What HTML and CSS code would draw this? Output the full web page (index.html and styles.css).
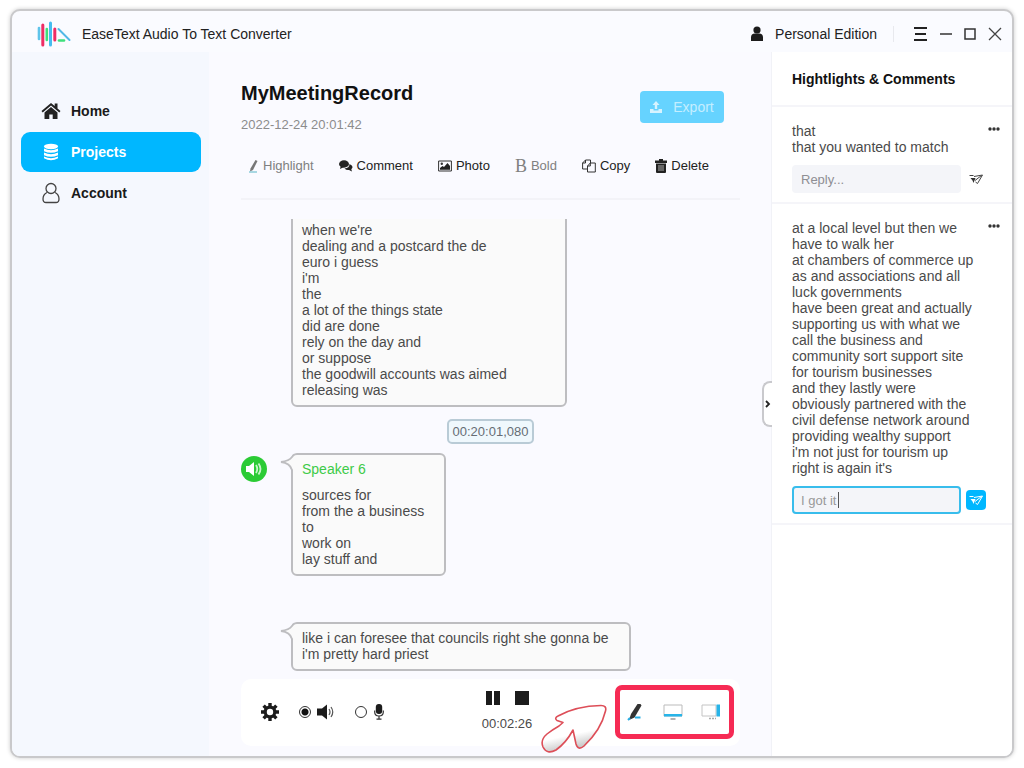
FILE: index.html
```html
<!DOCTYPE html>
<html lang="en">
<head>
    <meta charset="UTF-8">
    <meta name="viewport" content="width=device-width, initial-scale=1.0">
    <title>EaseText Audio To Text Converter</title>
    <link rel="stylesheet" href="styles.css">
</head>
<body>
    <div class="window">
        <!-- Title bar -->
        <header class="titlebar">
            <svg class="logo" width="34" height="26" viewBox="0 0 34 26" fill="none" stroke-width="2.6" stroke-linecap="round">
                <path d="M2 7v11" stroke="#5fc4ea"/>
                <path d="M5.800 4v20" stroke="#ee2d64" stroke-width="3"/>
                <path d="M9.800 8v11" stroke="#3fe07c"/>
                <path d="M13.500 2v22" stroke="#45bdf0" stroke-width="3"/>
                <path d="M17.800 8v11" stroke="#ee2d64" stroke-width="3"/>
                <path d="M21.500 8l11 11" stroke="#52b8e6" stroke-width="2"/>
                <path d="M22 19.500h5" stroke="#3fe07c"/>
            </svg>
            <span class="app-name">EaseText Audio To Text Converter</span>
            <span class="edition">
                <svg width="14" height="16" viewBox="0 0 14 16" fill="#1c1c1c"><circle cx="7" cy="4" r="3.600"/><path d="M1 15V11.500Q1 7.500 5 7.500h4q4 0 4 4V15z"/></svg>
                Personal Edition
            </span>
            <div class="window-buttons">
                <button aria-label="Menu"><svg width="14" height="16" viewBox="0 0 14 16" stroke="#222" stroke-width="2"><path d="M0 2h13M1 8h11M0 14h13"/></svg></button>
                <button aria-label="Minimize"><svg width="12" height="16" viewBox="0 0 12 16" stroke="#333" stroke-width="1.500"><path d="M0 8h12"/></svg></button>
                <button aria-label="Maximize"><svg width="12" height="12" viewBox="0 0 12 12" fill="none" stroke="#333" stroke-width="1.500"><path d="M1 1h10v10H1z"/></svg></button>
                <button aria-label="Close"><svg width="14" height="14" viewBox="0 0 14 14" stroke="#444" stroke-width="1.300"><path d="M1 1l12 12M13 1L1 13"/></svg></button>
            </div>
        </header>

        <div class="content">
            <!-- Sidebar -->
            <nav class="sidebar">
                <a href="#">
                    <svg width="20" height="18" viewBox="0 0 20 18" fill="#222"><path d="M10 1L0.500 9l1.200 1.400L10 3.500l8.300 6.900L19.500 9 16.500 6.400V1.500h-2.800v2.600z"/><path d="M10 5l-6.500 5.500V17h4.800v-4.500h3.400V17h4.800v-6.500z"/></svg>
                    Home
                </a>
                <a href="#" class="active">
                    <svg width="20" height="18" viewBox="0 0 20 18" fill="#fff"><ellipse cx="10" cy="3.500" rx="7" ry="2.700"/><path d="M3 5.600q7 3.300 14 0v2.600q-7 3.300-14 0zM3 9.600q7 3.300 14 0v2.600q-7 3.300-14 0zM3 13.500q7 3.300 14 0v1.800q-7 4-14 0z"/></svg>
                    Projects
                </a>
                <a href="#">
                    <svg width="20" height="22" viewBox="0 0 20 22" fill="none" stroke="#444" stroke-width="1.300"><circle cx="10" cy="6.500" r="5"/><path d="M6 10.500Q2 12.500 2 17q0 3.500 3 3.500h10q3 0 3-3.500 0-4.500-4-6.500"/></svg>
                    Account
                </a>
            </nav>

            <!-- Transcript -->
            <main class="main">
                <div class="record-head">
                    <div>
                        <h1>MyMeetingRecord</h1>
                        <p class="date">2022-12-24 20:01:42</p>
                    </div>
                    <button class="export">
                        <svg width="12" height="12" viewBox="0 0 12 12" fill="#d6f3ff"><path d="M6 0l3.500 4H7.200v4H4.800V4H2.500zM0 8h3.500v1.500h5V8H12v4H0z"/></svg>
                        Export
                    </button>
                </div>

                <div class="toolbar">
                    <button class="muted"><svg width="11" height="14" viewBox="0 0 11 14"><path d="M7.500 1l2 1-4.500 9-3 1.500.5-3z" fill="#777"/><path d="M1 13h8" stroke="#8ccbd8" stroke-width="1.500"/></svg>Highlight</button>
                    <button><svg width="14" height="12" viewBox="0 0 14 12" fill="#222"><ellipse cx="5" cy="4" rx="5" ry="3.700"/><path d="M1 9l1-4 3 2zM10.500 4q0 4-5 4.500Q7.500 10.500 10 10l3 1.500-.7-2.300Q15.500 6.500 10.500 4z"/></svg>Comment</button>
                    <button><svg width="14" height="12" viewBox="0 0 14 12"><path d="M.6 1h12.800v10H.6z" fill="none" stroke="#333"/><circle cx="3.800" cy="3.800" r="1.200" fill="#333"/><path d="M2 9.800V8l2.500-2L6 7l3.500-4L12 6v3.800z" fill="#222"/></svg>Photo</button>
                    <button class="muted"><span class="letter-icon">B</span>Bold</button>
                    <button><svg width="14" height="14" viewBox="0 0 14 14" fill="#fafaff" stroke="#333"><path d="M3.500 1H8.500v9H.6V4zM3.500 1v3H.6"/><path d="M8.300 4h5v9H5.500V7zM8.300 4v3H5.500"/></svg>Copy</button>
                    <button><svg width="12" height="14" viewBox="0 0 12 14" fill="#222"><path d="M4 0h4v1.500h4V4H0V1.500h4z"/><path d="M1 4.500h10V13q0 1-1 1H2q-1 0-1-1z"/><path d="M4 6v6M6 6v6M8 6v6" stroke="#aaa"/></svg>Delete</button>
                </div>

                <div class="transcript">
                    <div class="row">
                        <div class="bubble wide">
                            when we're<br>
                            dealing and a postcard the de<br>
                            euro i guess<br>
                            i'm<br>
                            the<br>
                            a lot of the things state<br>
                            did are done<br>
                            rely on the day and<br>
                            or suppose<br>
                            the goodwill accounts was aimed<br>
                            releasing was
                        </div>
                    </div>
                    <time class="stamp">00:20:01,080</time>
                    <div class="row">
                        <svg class="speaker-icon" width="26" height="26" viewBox="0 0 26 26"><circle cx="13" cy="13" r="13" fill="#2bcb35"/><path d="M5 10h3l5-4v14l-5-4H5z" fill="#fff"/><path d="M15 9q2.500 4 0 8M17.500 7.500q4 5.500 0 11" fill="none" stroke="#c8f5ca" stroke-width="1.800"/></svg>
                        <div class="bubble">
                            <svg class="tail" width="14" height="24" viewBox="0 0 14 24"><path d="M14 1Q12 6 1 9q9 1 11 7l2 2z" fill="#fafafa"/><path d="M16 1Q14 1 12 4 9 8 1 9q9 1 11 8" fill="none" stroke="#bdbdc0" stroke-width="1.800"/></svg>
                            <div class="speaker">Speaker 6</div>
                            sources for<br>
                            from the a business<br>
                            to<br>
                            work on<br>
                            lay stuff and
                        </div>
                    </div>
                    <div class="row later">
                        <div class="bubble">
                            <svg class="tail" width="14" height="24" viewBox="0 0 14 24"><path d="M14 1Q12 6 1 9q9 1 11 7l2 2z" fill="#fafafa"/><path d="M16 1Q14 1 12 4 9 8 1 9q9 1 11 8" fill="none" stroke="#bdbdc0" stroke-width="1.800"/></svg>
                            like i can foresee that councils right she gonna be<br>
                            i'm pretty hard priest
                        </div>
                    </div>
                </div>

                <!-- Player -->
                <div class="player">
                    <div class="sources">
                        <button aria-label="Settings"><svg width="18" height="18" viewBox="0 0 18 18" fill="none" stroke="#1c1c1c"><circle cx="9" cy="9" r="4.800" stroke-width="3.200"/><path d="M9 0v4M9 14v4M0 9h4M14 9h4M2.600 2.600l2.600 2.600M12.800 12.800l2.600 2.600M15.400 2.600l-2.600 2.600M5.200 12.800l-2.600 2.600" stroke-width="3.400"/></svg></button>
                        <label><input type="radio" name="source" aria-label="System sound" checked><svg width="18" height="16" viewBox="0 0 18 16"><path d="M0 4.500h2v7H0zM2 4.500h3L10 .5v15l-5-4H2z" fill="#1c1c1c"/><path d="M12 5q2 3 0 6M14 3q3.500 5 0 10" fill="none" stroke="#555" stroke-width="1.200"/></svg></label>
                        <label><input type="radio" name="source" aria-label="Microphone"><svg width="12" height="16" viewBox="0 0 10 16"><rect x="1.800" y="0" width="6.400" height="10" rx="3" fill="#1c1c1c"/><path d="M.7 6.500V8q0 4 4.300 4t4.300-4V6.500M5 12v3M2.500 15.200h5" fill="none" stroke="#333" stroke-width="1.200"/></svg></label>
                    </div>
                    <div class="transport">
                        <div class="transport-buttons">
                            <button aria-label="Pause"><svg width="14" height="14" viewBox="0 0 14 14" fill="#1c1c1c"><path d="M0 0h6v14H0zM8 0h6v14H8z"/></svg></button>
                            <button aria-label="Stop"><svg width="14" height="14" viewBox="0 0 14 14" fill="#1c1c1c"><path d="M0 0h14v14H0z"/></svg></button>
                        </div>
                        <span class="elapsed">00:02:26</span>
                    </div>
                    <div class="views">
                        <button aria-label="Mark"><svg width="18" height="18" viewBox="0 0 18 18"><path d="M11.500 1h3l1 1.500-7 12L3 17l2-6z" fill="#333"/><path d="M2 17l2-2M9 14.500h5.500" stroke="#28aee4" stroke-width="2"/></svg></button>
                        <button aria-label="Subtitle bar"><svg width="20" height="18" viewBox="0 0 20 18"><path d="M1 2h18v11H1z" fill="#fff" stroke="#bbb"/><path d="M1 11h18v2.500H1z" fill="#28b4e8"/><path d="M7.500 16h5" stroke="#999" stroke-width="1.500"/></svg></button>
                        <button aria-label="Side panel"><svg width="20" height="18" viewBox="0 0 20 18"><path d="M1 2h14v11H1z" fill="#fff" stroke="#c4c4c4"/><path d="M15.500 1.500h3.500v12h-3.500z" fill="#28b4e8"/><path d="M8 15.500h7" stroke="#aaa" stroke-width="1.500" stroke-dasharray="2 1"/></svg></button>
                    </div>
                    <svg class="pointer" width="68" height="52" viewBox="0 0 68 52">
                        <defs><linearGradient id="arrow" x1="0" y1="0" x2=".3" y2="1"><stop offset=".7" stop-color="#fff"/><stop offset="1" stop-color="#c4c4c4"/></linearGradient></defs>
                        <path d="M18 13Q36 3 61 2.500Q67 2.500 65.500 8Q61 27 44 43Q38 48 36 41L33 27Q26 40 16 47Q7 52 3 44Q0 37 7 31Q12 27 19 23L23 19.500L17 17.500Q14 15 18 13Z" fill="url(#arrow)" stroke="#dd4e58" stroke-width="1.600" stroke-linejoin="round"/>
                    </svg>
                </div>
            </main>

            <!-- Comments -->
            <aside class="comments">
                <button class="collapse" aria-label="Collapse"><svg width="6" height="8" viewBox="0 0 6 8" fill="none" stroke="#222" stroke-width="1.800"><path d="M1 1l3 3-3 3"/></svg></button>
                <h2>Hightlights &amp; Comments</h2>
                <section class="comment">
                    <button class="more" aria-label="More"><svg width="12" height="4" viewBox="0 0 12 4" fill="#333"><circle cx="2" cy="2" r="1.700"/><circle cx="6" cy="2" r="1.700"/><circle cx="10" cy="2" r="1.700"/></svg></button>
                    <p>that<br>
                    that you wanted to match</p>
                    <div class="reply">
                        <input type="text" placeholder="Reply..." aria-label="Reply">
                        <button class="send" aria-label="Send"><svg width="14" height="11" viewBox="0 0 14 11" fill="none" stroke="#444"><path d="M.5 1.500h4M5 2.500L13.500 1 8.500 9.500 6.500 8M12.500 1.500L6 6.500"/><path d="M1.500 4h5L4.500 9 3.500 6.500z" fill="#333" stroke="none"/></svg></button>
                    </div>
                </section>
                <section class="comment">
                    <button class="more" aria-label="More"><svg width="12" height="4" viewBox="0 0 12 4" fill="#333"><circle cx="2" cy="2" r="1.700"/><circle cx="6" cy="2" r="1.700"/><circle cx="10" cy="2" r="1.700"/></svg></button>
                    <p>at a local level but then we<br>
                    have to walk her<br>
                    at chambers of commerce up<br>
                    as and associations and all<br>
                    luck governments<br>
                    have been great and actually<br>
                    supporting us with what we<br>
                    call the business and<br>
                    community sort support site<br>
                    for tourism businesses<br>
                    and they lastly were<br>
                    obviously partnered with the<br>
                    civil defense network around<br>
                    providing wealthy support<br>
                    i'm not just for tourism up<br>
                    right is again it's</p>
                    <div class="reply editing">
                        <input type="text" value="I got it" aria-label="Reply">
                        <span class="caret"></span>
                        <button class="send" aria-label="Send"><svg width="14" height="11" viewBox="0 0 14 11" fill="none" stroke="#fff"><path d="M.5 1.500h4M5 2.500L13.500 1 8.500 9.500 6.500 8M12.500 1.500L6 6.500"/><path d="M1.500 4h5L4.500 9 3.500 6.500z" fill="#fff" stroke="none"/></svg></button>
                    </div>
                </section>
            </aside>
        </div>
    </div>
</body>
</html>
```
FILE: styles.css
```css
* {
    box-sizing: border-box;
}
body {
    margin: 0;
    padding: 9px 10px 10px;
    height: 100vh;
    background-color: #fff;
    font-family: "Liberation Sans", Arial, sans-serif;
    font-size: 14px;
    line-height: 16px;
    color: #4a4a4a;
}
h1, h2, p {
    margin: 0;
}
button {
    display: flex;
    align-items: center;
    justify-content: center;
    padding: 0;
    border: none;
    background: none;
    font: inherit;
    color: inherit;
    cursor: pointer;
}
svg {
    display: block;
    flex-shrink: 0;
}
.window {
    display: flex;
    flex-direction: column;
    height: 100%;
    border: 2px solid #c9c9cb;
    border-radius: 10px;
    box-shadow: 0 0 4px #ccc;
    background-color: #fafbff;
    overflow: hidden;
}

/* Title bar */
.titlebar {
    display: flex;
    align-items: center;
    height: 41px;
    padding: 5px 10px 0 25px;
    color: #222;
}
.app-name {
    margin-left: 11px;
}
.edition {
    display: flex;
    gap: 11px;
    margin-left: auto;
    padding-right: 16px;
    border-right: 1px solid #e8e9ee;
}
.window-buttons {
    display: flex;
    gap: 12px;
    margin-left: 20px;
}

.content {
    display: flex;
    flex: 1;
    min-height: 0;
}

/* Sidebar */
.sidebar {
    width: 20%;
    max-width: 197px;
    padding: 39px 8px 0 9px;
    background-color: #f5f8fe;
}
.sidebar a {
    display: flex;
    align-items: center;
    gap: 10px;
    height: 40px;
    margin-bottom: 1px;
    padding-left: 20px;
    border-radius: 9px;
    font-weight: bold;
    color: #1a1a1a;
    text-decoration: none;
}
.sidebar a.active {
    background-color: #00b7ff;
    color: #fff;
}

/* Main column */
.main {
    display: flex;
    flex: 1;
    flex-direction: column;
    min-width: 0;
    padding: 29px 31px 10px 32px;
    background-color: #fafaff;
}
.record-head {
    display: flex;
    justify-content: space-between;
    padding: 0 16px 0 0;
}
h1 {
    font-size: 20px;
    line-height: 24px;
    color: #111;
}
.date {
    margin-top: 12px;
    font-size: 13px;
    color: #8c8c8c;
}
.export {
    gap: 11px;
    width: 84px;
    height: 32px;
    margin-top: 10px;
    border-radius: 4px;
    background-color: #66d3ff;
    color: #c4eeff;
}
.toolbar {
    display: flex;
    align-items: center;
    gap: 25px;
    height: 67px;
    padding-left: 7px;
    border-bottom: 2px solid #f3f3f8;
    font-size: 13px;
    color: #222;
}
.toolbar button {
    gap: 4px;
}
.toolbar .muted {
    color: #808080;
}
.letter-icon {
    font: 18px/16px "Liberation Serif", serif;
}

/* Transcript bubbles */
.transcript {
    display: flex;
    flex: 1;
    flex-direction: column;
    justify-content: flex-end;
    min-height: 0;
    margin-top: 19px;
    overflow: hidden;
}
.row {
    display: grid;
    grid-template-columns: 26px auto;
    justify-content: start;
    column-gap: 24px;
}
.row.later {
    margin-top: 46px;
}
.speaker-icon {
    margin-top: 3px;
}
.bubble {
    position: relative;
    grid-column: 2;
    padding: 6px 20px 7px 9px;
    border: 2px solid #bdbdc0;
    border-radius: 6px;
    background-color: #fafafa;
}
.bubble.wide {
    width: 276px;
    padding-top: 24px;
}
.tail {
    position: absolute;
    top: -2px;
    left: -13px;
}
.speaker {
    margin-bottom: 10px;
    color: #3ecb48;
}
.stamp {
    align-self: center;
    margin: 12px 0 9px;
    padding: 3px 4px 2px;
    border: 2px solid #b9cbd6;
    border-radius: 5px;
    background-color: #eff8fd;
    font-size: 13px;
    color: #666d75;
}

/* Player */
.player {
    position: relative;
    display: flex;
    align-items: center;
    height: 67px;
    margin-top: 8px;
    padding: 0 6px 2px 20px;
    border-radius: 10px;
    background-color: #fff;
}
.sources {
    display: flex;
    align-items: center;
    gap: 20px;
}
.sources label {
    display: flex;
    align-items: center;
    gap: 6px;
}
.sources input {
    appearance: none;
    width: 12px;
    height: 12px;
    margin: 0;
    border: 1px solid #333;
    border-radius: 50%;
}
.sources input:checked {
    background: radial-gradient(#111 0 3px, #fff 4px);
}
.transport {
    display: flex;
    flex: 1;
    flex-direction: column;
    align-items: center;
    gap: 11px;
    padding-left: 14px;
}
.transport-buttons {
    display: flex;
    gap: 15px;
}
.elapsed {
    font-size: 13px;
}
.views {
    display: flex;
    align-items: center;
    justify-content: space-between;
    width: 119px;
    height: 54px;
    padding: 0 8px 0 6px;
    border: 5px solid #f62b54;
    border-radius: 7px;
}
.pointer {
    position: absolute;
    right: 132px;
    bottom: -9px;
}

/* Comments panel */
.comments {
    position: relative;
    width: 25%;
    max-width: 241px;
    border-left: 1px solid #f1f2f7;
    background-color: #fff;
}
h2 {
    padding: 19px 20px 18px;
    border-bottom: 2px solid #f5f5f9;
    font-size: 14px;
    line-height: 16px;
    color: #111;
}
.comment {
    position: relative;
    padding: 16px 0 9px 20px;
    border-bottom: 2px solid #f5f5f9;
}
.more {
    position: absolute;
    top: 20px;
    right: 12px;
}
.reply {
    position: relative;
    display: flex;
    align-items: center;
    gap: 5px;
    margin-top: 10px;
}
.reply input {
    width: 169px;
    height: 28px;
    padding: 0 9px;
    border: none;
    border-radius: 4px;
    background-color: #f4f5f9;
    font: 13px "Liberation Sans", Arial, sans-serif;
    color: #999;
}
.reply input::placeholder {
    color: #8e8e93;
}
.send {
    width: 20px;
    height: 20px;
    border-radius: 4px;
}
.editing input {
    padding: 0 7px;
    border: 2px solid #38bdec;
    outline: none;
}
.editing .send {
    background-color: #00b7ff;
}
.caret {
    position: absolute;
    left: 46px;
    width: 1px;
    height: 16px;
    background-color: #555;
}
.collapse {
    position: absolute;
    top: 329px;
    left: -10px;
    width: 10px;
    height: 46px;
    border: 2px solid #c9c9cd;
    border-right: none;
    border-radius: 8px 0 0 8px;
    background-color: #fff;
}
```
